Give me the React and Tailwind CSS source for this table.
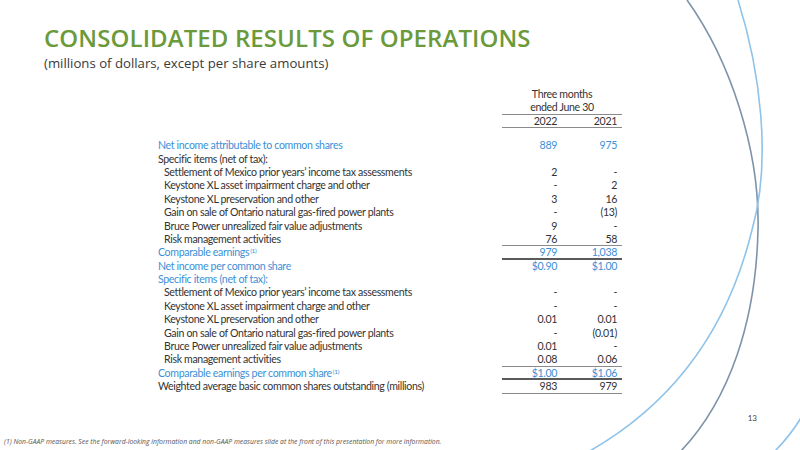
import React from "react";

const rows = [
  { label: "Net income attributable to common shares", a: "889", b: "975", blue: true },
  { label: "Specific items (net of tax):", a: "", b: "" },
  { label: "Settlement of Mexico prior years’ income tax assessments", a: "2", b: "-", indent: true },
  { label: "Keystone XL asset impairment charge and other", a: "-", b: "2", indent: true },
  { label: "Keystone XL preservation and other", a: "3", b: "16", indent: true },
  { label: "Gain on sale of Ontario natural gas-fired power plants", a: "-", b: "(13)", indent: true },
  { label: "Bruce Power unrealized fair value adjustments", a: "9", b: "-", indent: true },
  { label: "Risk management activities", a: "76", b: "58", indent: true, line: "thin" },
  { label: "Comparable earnings", sup: true, a: "979", b: "1,038", blue: true, line: "thick" },
  { label: "Net income per common share", a: "$0.90", b: "$1.00", blue: true },
  { label: "Specific items (net of tax):", a: "", b: "", blue: true },
  { label: "Settlement of Mexico prior years’ income tax assessments", a: "-", b: "-", indent: true },
  { label: "Keystone XL asset impairment charge and other", a: "-", b: "-", indent: true },
  { label: "Keystone XL preservation and other", a: "0.01", b: "0.01", indent: true },
  { label: "Gain on sale of Ontario natural gas-fired power plants", a: "-", b: "(0.01)", indent: true },
  { label: "Bruce Power unrealized fair value adjustments", a: "0.01", b: "-", indent: true },
  { label: "Risk management activities", a: "0.08", b: "0.06", indent: true, line: "thin" },
  { label: "Comparable earnings per common share", sup: true, a: "$1.00", b: "$1.06", blue: true, line: "thick" },
  { label: "Weighted average basic common shares outstanding (millions)", a: "983", b: "979", line: "thin" },
];

function lineCls(line) {
  if (line === "thin") return "border-b border-[#8a8a8a]";
  if (line === "thick") return "border-b-2 border-[#5a5a5a]";
  return "";
}

export default function App() {
  const font = { fontFamily: "Lato, 'Open Sans', sans-serif" };
  return (
    <div className="relative w-[800px] h-[450px] bg-white overflow-hidden flex flex-col">
      <svg className="absolute inset-0 pointer-events-none" width="800" height="450" viewBox="0 0 800 450" fill="none">
        <path d="M687,0 C730,60 760,150 758,230 C756,320 730,400 680,452" stroke="#7f93a8" strokeWidth="1.6" />
        <path d="M738,0 C760,70 772,160 752,230 C730,320 680,400 588,452" stroke="#8fc3ea" strokeWidth="1.6" />
        <path d="M774,452 C786,440 794,430 802,416" stroke="#8fc3ea" strokeWidth="1.6" />
      </svg>

      <div className="relative pl-[44px] pt-[23px]">
        <div className="text-[24px] leading-[29px] font-semibold tracking-[0.1px] text-[#6b9a3b]" style={{ fontFamily: "'Open Sans', sans-serif" }}>
          CONSOLIDATED RESULTS OF OPERATIONS
        </div>
        <div className="text-[13.2px] leading-[18px] text-[#3a3a3a] mt-[2px]" style={{ fontFamily: "'Open Sans', sans-serif" }}>
          (millions of dollars, except per share amounts)
        </div>
      </div>

      <div className="relative ml-[158px] mt-[16px] grid grid-cols-[344px_60px_60px] text-[10.6px] tracking-[-0.35px] text-[#333]" style={font}>
        <div className="h-[13.4px]" />
        <div className="col-span-2 h-[13.4px] leading-[13px] text-center">Three months</div>
        <div className="h-[13.4px]" />
        <div className="col-span-2 h-[13.4px] leading-[13px] text-center border-b border-[#8a8a8a] box-border">ended June 30</div>
        <div className="h-[13.4px]" />
        <div className="h-[13.4px] leading-[13px] text-right pr-[5px] border-b border-[#8a8a8a] box-border">2022</div>
        <div className="h-[13.4px] leading-[13px] text-right pr-[5px] border-b border-[#8a8a8a] box-border">2021</div>
        <div className="col-span-3 h-[11px]" />
        {rows.map((r, i) => (
          <React.Fragment key={i}>
            <div className={`h-[13.4px] leading-[13px] whitespace-nowrap ${r.indent ? "pl-[6px]" : ""} ${r.blue ? "text-[#3d8fd6]" : ""}`}>
              {r.label}
              {r.sup && <span className="relative -top-[3px] ml-[1px] text-[6.5px] leading-none">(1)</span>}
            </div>
            <div className={`h-[13.4px] leading-[13px] text-right pr-[5px] box-border ${lineCls(r.line)} ${r.blue ? "text-[#3d8fd6]" : ""}`}>{r.a}</div>
            <div className={`h-[13.4px] leading-[13px] text-right pr-[5px] box-border ${lineCls(r.line)} ${r.blue ? "text-[#3d8fd6]" : ""}`}>{r.b}</div>
          </React.Fragment>
        ))}
      </div>

      <div className="flex-1" />
      <div className="relative flex justify-end pr-[43px] text-[8px] leading-[10px] text-[#444]" style={font}>13</div>
      <div className="relative pl-[4px] pt-[15px] pb-[4px] text-[6.8px] leading-[8px] italic text-[#555]" style={{ fontFamily: "'Open Sans', sans-serif" }}>
        (1) Non-GAAP measures. See the forward-looking information and non-GAAP measures slide at the front of this presentation for more information.
      </div>
    </div>
  );
}
